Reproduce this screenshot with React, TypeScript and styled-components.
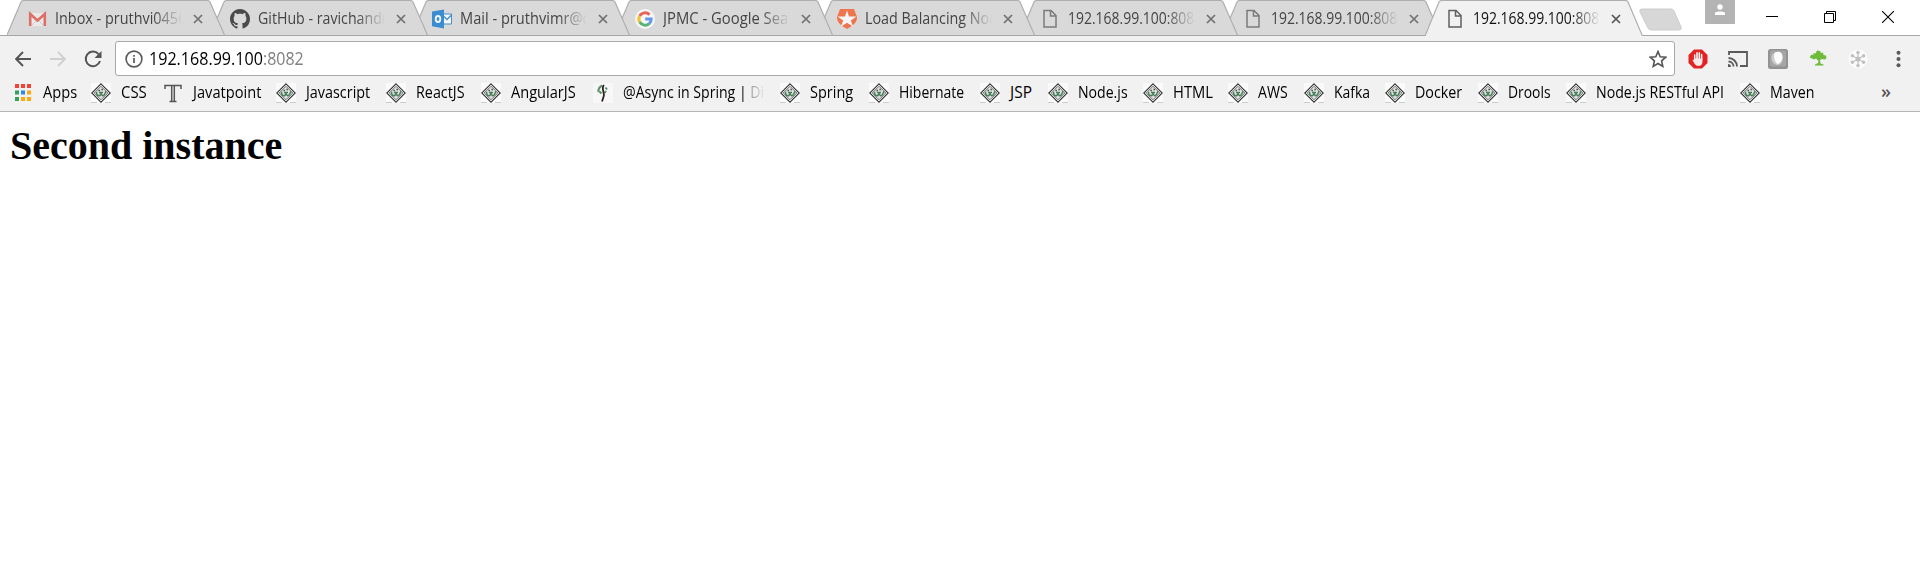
import React, { useLayoutEffect, useRef, useState } from 'react';
import styled, { createGlobalStyle } from 'styled-components';

const Global = createGlobalStyle`
  body { margin: 0; background: #fff; overflow: hidden; }
  * { box-sizing: border-box; }
  svg { display: block; flex: none; }
`;

const Browser = styled.div`
  width: 1920px;
  height: 569px;
  background: #fff;
  font-family: 'Open Sans', 'Noto Sans', sans-serif;
  color: #000;
`;

const TitleBar = styled.header`
  display: flex;
  height: 36px;
  border-bottom: 1px solid #a6a6a6;
  padding-left: 7px;
`;

const TabItem = styled.div<{ $active?: boolean; $order: number }>`
  position: relative;
  z-index: ${p => (p.$active ? 20 : p.$order)};
  flex: none;
  width: 218px;
  height: 35px;
  margin-right: -15.4px;
  display: flex;
  align-items: center;
  padding: 3px 0 0 20px;
`;

const TabShape = styled.svg`
  position: absolute;
  left: 0;
  top: 0;
  z-index: -1;
`;

const TabIcon = styled.div<{ $dim?: boolean }>`
  width: 20px;
  height: 20px;
  flex: none;
  opacity: ${p => (p.$dim ? 0.78 : 1)};
`;

const TabTitle = styled.div<{ $active?: boolean }>`
  flex: none;
  width: 127px;
  margin: -3px 11px 0 8px;
  color: ${p => (p.$active ? '#111' : '#444')};
  mask-image: linear-gradient(to right, #000 98px, transparent 127px);
`;

const Fitted = styled.span<{ $size: number; $shade?: string }>`
  display: inline-block;
  white-space: pre;
  transform-origin: left center;
  font-size: ${p => p.$size}px;
  line-height: 24px;
  color: ${p => p.$shade ?? 'inherit'};
`;

const FitBox = styled.span<{ $width: number }>`
  display: block;
  flex: none;
  width: ${p => p.$width}px;
  height: 24px;
`;

function FitText({ text, width, size = 15.5, shade }: { text: string; width: number; size?: number; shade?: string }) {
  const ref = useRef<HTMLSpanElement>(null);
  const [scale, setScale] = useState(1);
  useLayoutEffect(() => {
    if (ref.current) setScale(width / ref.current.offsetWidth);
  }, [text, width]);
  return (
    <FitBox $width={width}>
      <Fitted ref={ref} $size={size} $shade={shade} style={{ transform: `scaleX(${scale})` }}>{text}</Fitted>
    </FitBox>
  );
}

const NewTab = styled.svg`
  margin: 8px 0 0 11px;
`;

const ProfileButton = styled.div`
  width: 30px;
  height: 24px;
  margin-left: auto;
  background: #b3b3b3;
  display: flex;
  justify-content: center;
  padding-top: 4px;
`;

const WindowControls = styled.div`
  display: flex;
  gap: 46px;
  padding: 11px 26px 0 31px;
`;

const Toolbar = styled.div`
  height: 41px;
  background: #f1f1f1;
  display: flex;
  align-items: flex-start;
  padding-top: 5px;
`;

const NavButtons = styled.div`
  width: 115px;
  height: 36px;
  display: flex;
  align-items: center;
  gap: 18.5px;
  padding-left: 15px;
`;

const AddressBar = styled.div`
  width: 1560px;
  height: 35px;
  border: 1px solid #a8a8a8;
  border-radius: 3px;
  background: #fff;
  display: flex;
  align-items: center;
  padding: 1px 7px 0 9px;
`;

const Address = styled.div`
  display: flex;
  flex: 1;
  margin: -2px 0 0 6px;
`;

const Extensions = styled.div`
  height: 36px;
  display: flex;
  align-items: center;
  gap: 20px;
  padding-left: 12.5px;
`;

const Bookmarks = styled.nav`
  height: 35px;
  background: #f1f1f1;
  border-bottom: 1px solid #b4b4b4;
  display: flex;
  padding: 0 0 2px 13px;
`;

const Bookmark = styled.div<{ $width: number }>`
  width: ${p => p.$width}px;
  flex: none;
  display: flex;
  align-items: center;
  gap: 10px;
`;

const FadeOut = styled.div<{ $fade?: boolean }>`
  margin-top: -2px;
  mask-image: ${p => (p.$fade ? 'linear-gradient(to right, #000 122px, rgba(0,0,0,.4) 126px, transparent 143px)' : 'none')};
`;

const Overflow = styled.div`
  margin: 3px 0 0 46px;
  font-size: 18px;
  font-weight: 600;
  line-height: 22px;
  color: #555;
`;

const Page = styled.main`
  padding: 11px 10px;
`;

const Heading = styled.h1`
  margin: 0;
  font: bold 40px/46px 'Liberation Serif', serif;
`;

const Gmail = () => (
  <svg width="20" height="20" viewBox="0 0 20 20">
    <path d="M2 4h17v13H2z" fill="#eee" />
    <path d="M3.200 17V5l7.300 6.500L17.800 5v12" fill="none" stroke="#dd5347" strokeWidth="2.600" />
    <path d="M5 16l4-4M16 16l-4-4" stroke="#ccc" />
  </svg>
);

const Github = () => (
  <svg width="20" height="20" viewBox="0 0 16 16">
    <path fill="#222" d="M8 0C3.58 0 0 3.58 0 8c0 3.54 2.29 6.53 5.47 7.59.4.07.55-.17.55-.38 0-.19-.01-.82-.01-1.49-2.01.37-2.53-.49-2.69-.94-.09-.23-.48-.94-.82-1.13-.28-.15-.68-.52-.01-.53.63-.01 1.08.58 1.23.82.72 1.21 1.87.87 2.33.66.07-.52.28-.87.51-1.07-1.78-.2-3.64-.89-3.64-3.95 0-.87.31-1.59.82-2.15-.08-.2-.36-1.02.08-2.12 0 0 .67-.21 2.2.82.64-.18 1.32-.27 2-.27s1.36.09 2 .27c1.53-1.04 2.2-.82 2.2-.82.44 1.1.16 1.92.08 2.12.51.56.82 1.27.82 2.15 0 3.07-1.87 3.75-3.65 3.95.29.25.54.73.54 1.48 0 1.07-.01 1.93-.01 2.2 0 .21.15.46.55.38A8.01 8.01 0 0 0 16 8c0-4.42-3.58-8-8-8z" />
  </svg>
);

const Outlook = () => (
  <svg width="20" height="20" viewBox="0 0 20 20">
    <path d="M11 5h8.500v10H11z" fill="#fff" stroke="#1979ca" />
    <path d="M12 7.500l3 3 4.500-4.500" fill="none" stroke="#1979ca" strokeWidth="1.300" />
    <path d="M0 2.500L12 .5v19L0 17.300z" fill="#0f78d0" />
    <ellipse cx="6" cy="10" rx="2.300" ry="3" fill="none" stroke="#fff" strokeWidth="1.800" />
  </svg>
);

const Google = () => (
  <svg width="20" height="20" viewBox="0 0 20 20">
    <circle cx="10" cy="10" r="10" fill="#fff" />
    <g fill="none" strokeWidth="3">
      <path d="M4.700 6.900A6.200 6.200 0 0 1 14.500 5.700" stroke="#ea4335" />
      <path d="M4.700 13.100a6.200 6.200 0 0 1 0-6.200" stroke="#fbbc05" />
      <path d="M14.200 14.600a6.200 6.200 0 0 1-9.500-1.500" stroke="#34a853" />
      <path d="M10.200 10h6a6.200 6.200 0 0 1-2 4.600" stroke="#4285f4" />
    </g>
  </svg>
);

const Auth = () => (
  <svg width="20" height="20" viewBox="0 0 20 20">
    <path d="M3 0h14l3 8c0 5-3 8-10 12C3 16 0 13 0 8z" fill="#f65a25" />
    <path d="M10 1.500l2 6h7.500l-5.700 4 2.200 6-6-3.800-6 3.800 2.200-6L.5 7.500H8z" fill="#fff" />
  </svg>
);

const PageIcon = () => (
  <svg width="20" height="20" viewBox="0 0 20 20">
    <path d="M4 1.500h7l5 5V18H4zM10.500 1.500V7H16" fill="none" stroke="#606060" strokeWidth="1.500" />
  </svg>
);

const Diamond = () => (
  <svg width="20" height="20" viewBox="0 0 20 20">
    <path d="M0 0h20v20H0z" fill="#fafafa" />
    <path d="M0 19.500h6M14 19.500h6" stroke="#ccc" />
    <path d="M10 .8L19.200 10 10 19.200.8 10z" fill="#fff" stroke="#333" strokeWidth="1.100" />
    <path d="M10 3.200l6.800 6.800-6.800 6.800L3.200 10z" fill="#dde1de" stroke="#555" strokeWidth=".8" />
    <path d="M5.500 8.800c0 2.500 1 4 2.500 4s1.500-2 2-2 1 2 2 2 2-2 3-4.500M8 9.500h4" fill="none" stroke="#497d5b" strokeWidth="1.500" />
    <path d="M7.500 7.500h1.300M10.500 6.500h1.300" stroke="#333" strokeWidth="1.300" />
  </svg>
);

const AppsIcon = () => (
  <svg width="20" height="20" viewBox="0 0 20 20">
    {['#f44336', '#f44336', '#f44336', '#34a05b', '#2a8af0', '#fbab0b', '#34a05b', '#fbab0b', '#fbab0b'].map((c, i) => (
      <rect key={i} x={2 + (i % 3) * 6} y={1 + Math.floor(i / 3) * 6.500} width="4" height="4" fill={c} />
    ))}
  </svg>
);

const Typewriter = () => (
  <svg width="20" height="20" viewBox="0 0 20 20">
    <path d="M2 6V2.500h16V6M8.700 3v15M11.300 3v15M6.500 18.500h7" fill="none" stroke="#555" strokeWidth="1.500" />
  </svg>
);

const Sprout = () => (
  <svg width="20" height="20" viewBox="0 0 20 20">
    <path d="M0 0h20v20H0z" fill="#f7f7f7" />
    <path d="M9.500 2.500C6 4 5 5.500 5.500 9M12.500 4.500l1.500 2M6.500 8.500l2 2M13 8l-1.500 2" fill="none" stroke="#5d9069" strokeWidth="2" />
    <path d="M11 2C7.500 6 12.500 10 10.500 14l-1.500 4.500" fill="none" stroke="#30211e" strokeWidth="1.800" />
  </svg>
);

const Shape = ({ active }: { active?: boolean }) => (
  <TabShape width="218" height="36" viewBox="0 0 218 36">
    <path
      d={`M0 ${active ? 36 : 35}L14 2Q15 .5 17 .5H200Q202 .5 203 2L217.500 ${active ? 36 : 35}`}
      fill={active ? '#f1f1f1' : '#d9d9d9'}
      stroke="#aeaeae"
      strokeWidth="1.200"
    />
  </TabShape>
);

const Close = ({ active }: { active?: boolean }) => (
  <svg width="10" height="10" viewBox="0 0 10 10">
    <path d="M1 1l8 8M9 1L1 9" stroke={active ? '#555' : '#707070'} strokeWidth="1.700" />
  </svg>
);

const tabs: { title: string; width: number; icon: () => React.JSX.Element }[] = [
  { title: 'Inbox - pruthvi0456', width: 131, icon: Gmail },
  { title: 'GitHub - ravichandr', width: 130, icon: Github },
  { title: 'Mail - pruthvimr@o', width: 131, icon: Outlook },
  { title: 'JPMC - Google Sear', width: 131, icon: Google },
  { title: 'Load Balancing Nod', width: 133, icon: Auth },
  { title: '192.168.99.100:808', width: 126, icon: PageIcon },
  { title: '192.168.99.100:808', width: 126, icon: PageIcon },
  { title: '192.168.99.100:808', width: 126, icon: PageIcon },
];

const bookmarks: { label: string; text: number; width: number; icon?: () => React.JSX.Element }[] = [
  { label: 'Apps', text: 34, width: 78, icon: AppsIcon },
  { label: 'CSS', text: 26, width: 72 },
  { label: 'Javatpoint', text: 68, width: 113, icon: Typewriter },
  { label: 'Javascript', text: 64, width: 110 },
  { label: 'ReactJS', text: 49, width: 95 },
  { label: 'AngularJS', text: 65, width: 112 },
  { label: '@Async in Spring | Di', text: 141, width: 187, icon: Sprout },
  { label: 'Spring', text: 43, width: 89 },
  { label: 'Hibernate', text: 65, width: 111 },
  { label: 'JSP', text: 22, width: 68 },
  { label: 'Node.js', text: 50, width: 95 },
  { label: 'HTML', text: 40, width: 85 },
  { label: 'AWS', text: 30, width: 76 },
  { label: 'Kafka', text: 36, width: 81 },
  { label: 'Docker', text: 47, width: 93 },
  { label: 'Drools', text: 43, width: 88 },
  { label: 'Node.js RESTful API', text: 128, width: 174 },
  { label: 'Maven', text: 45, width: 95 },
];

const NavIcons = () => (
  <NavButtons>
    <svg width="16" height="16" viewBox="0 0 16 16"><path d="M16 8H1.500M8 1L1.200 8 8 15" fill="none" stroke="#555" strokeWidth="1.900" /></svg>
    <svg width="16" height="16" viewBox="0 0 16 16"><path d="M0 8h14.500M8 1l6.800 7L8 15" fill="none" stroke="#d0d0d0" strokeWidth="1.900" /></svg>
    <svg width="18" height="18" viewBox="0 0 18 18"><path d="M14.500 4A7.300 7.300 0 1 0 16 11" fill="none" stroke="#555" strokeWidth="2" /><path d="M17.500 1v7h-7z" fill="#555" /></svg>
  </NavButtons>
);

const ExtensionIcons = () => (
  <Extensions>
    <svg width="20" height="20" viewBox="0 0 20 20">
      <path d="M6 .5h8L19.500 6v8L14 19.500H6L.5 14V6z" fill="#e32222" />
      <path d="M6.700 11V6M9 10V3.800M11.300 10V3.800M13.600 11V5.500" stroke="#fff" strokeWidth="1.500" strokeLinecap="round" />
      <path d="M6 9.500h8.400v3.500c0 2.700-1.700 4-4 4-2 0-3-1-4-2.500l-2-3.500 1.600-.3z" fill="#f8e9e9" />
    </svg>
    <svg width="20" height="20" viewBox="0 0 20 20">
      <path d="M1 6V3h18v14h-7M.5 9a8.500 8.500 0 0 1 8.500 8.500M.5 12.500a5 5 0 0 1 5 5" fill="none" stroke="#5a5a5a" strokeWidth="1.800" />
      <path d="M0 15a3 3 0 0 1 3 3H0z" fill="#5a5a5a" />
    </svg>
    <svg width="20" height="20" viewBox="0 0 20 20">
      <rect width="20" height="20" rx="2.500" fill="#929292" />
      <rect x="2" y="1.500" width="16" height="16" rx="2" fill="#a6a6a6" />
      <ellipse cx="9" cy="9.500" rx="5.500" ry="6.500" fill="#ccc" transform="rotate(-20 9 9.500)" />
      <path d="M7 3.500c5-2 8 1 7.500 5-.5 4-3 6-5 6.500C6.500 13 5 7 7 3.500z" fill="#fcfcfc" />
    </svg>
    <svg width="20" height="20" viewBox="0 0 20 20">
      <path d="M1.500 8.500l2-3 2 .5V4l2 .5 1.500-3 3 .5 1 2 2-.5.5 2.500 2.500.5L18.500 9l-1.500 1.500-3-.5-2 1 .5 3.500 3 1v1H7v-1l3-1.500.5-2L8 9.500l-2 1-2-1z" fill="#6fbb3c" />
    </svg>
    <svg width="20" height="20" viewBox="0 0 20 20">
      <circle cx="10" cy="10" r="9.500" fill="#fbfbfb" />
      {[0, 60, 120].map(a => (
        <g key={a} transform={`rotate(${a} 10 10)`} fill="#c0c0c0">
          <path d="M9.400 3h1.200v14H9.400z" />
          <circle cx="10" cy="3.500" r="1.700" />
          <circle cx="10" cy="16.500" r="1.700" />
        </g>
      ))}
      <circle cx="10" cy="10" r="2.500" fill="#c0c0c0" />
    </svg>
    <svg width="20" height="20" viewBox="0 0 20 20" fill="#5a5a5a">
      <circle cx="10.500" cy="3.700" r="2" /><circle cx="10.500" cy="10" r="2" /><circle cx="10.500" cy="16.300" r="2" />
    </svg>
  </Extensions>
);

export default function App() {
  return (
    <Browser>
      <Global />
      <TitleBar>
        {tabs.map(({ title, width, icon: Icon }, i) => {
          const active = i === tabs.length - 1;
          return (
            <TabItem key={i} $active={active} $order={10 - i}>
              <Shape active={active} />
              <TabIcon $dim={!active}><Icon /></TabIcon>
              <TabTitle $active={active}><FitText text={title} width={width} /></TabTitle>
              <Close active={active} />
            </TabItem>
          );
        })}
        <NewTab width="44" height="23" viewBox="0 0 44 23">
          <path d="M3 1h29q2 0 3 2l7 16q1 3-2 3H12q-2 0-3-2L1 4q-1-3 2-3z" fill="#d7d7d7" stroke="#ccc" />
        </NewTab>
        <ProfileButton>
          <svg width="12" height="12" viewBox="0 0 12 12" fill="#fff"><circle cx="6" cy="3" r="2.700" /><path d="M1 11V9c0-2 10-2 10 0v2z" /></svg>
        </ProfileButton>
        <WindowControls>
          <svg width="12" height="12" viewBox="0 0 12 12"><path d="M0 5.500h12" stroke="#000" /></svg>
          <svg width="12" height="12" viewBox="0 0 12 12"><path d="M.5 2.500h9v9h-9zM2.500 2.500v-2h9v9h-2" fill="none" stroke="#000" /></svg>
          <svg width="12" height="12" viewBox="0 0 12 12"><path d="M0 0l12 12M12 0L0 12" stroke="#000" strokeWidth="1.100" /></svg>
        </WindowControls>
      </TitleBar>
      <Toolbar>
        <NavIcons />
        <AddressBar>
          <svg width="18" height="18" viewBox="0 0 18 18">
            <circle cx="9" cy="9" r="7.900" fill="none" stroke="#5a5a5a" strokeWidth="1.600" />
            <path d="M9 8v5M9 5v1.800" stroke="#5a5a5a" strokeWidth="1.700" />
          </svg>
          <Address>
            <FitText text="192.168.99.100" width={114} size={17.5} />
            <FitText text=":8082" width={41} size={17.5} shade="#808080" />
          </Address>
          <svg width="18" height="18" viewBox="0 0 18 18">
            <path d="M9 1.500l2.200 5.200 5.600.5-4.200 3.700 1.200 5.500L9 13.500l-4.800 2.900 1.200-5.500L1.200 7.200l5.600-.5z" fill="none" stroke="#555" strokeWidth="1.600" />
          </svg>
        </AddressBar>
        <ExtensionIcons />
      </Toolbar>
      <Bookmarks>
        {bookmarks.map(({ label, text, width, icon: Icon = Diamond }) => (
          <Bookmark key={label} $width={width}>
            <Icon />
            <FadeOut $fade={label.startsWith('@')}><FitText text={label} width={text} /></FadeOut>
          </Bookmark>
        ))}
        <Overflow>»</Overflow>
      </Bookmarks>
      <Page>
        <Heading>Second instance</Heading>
      </Page>
    </Browser>
  );
}
